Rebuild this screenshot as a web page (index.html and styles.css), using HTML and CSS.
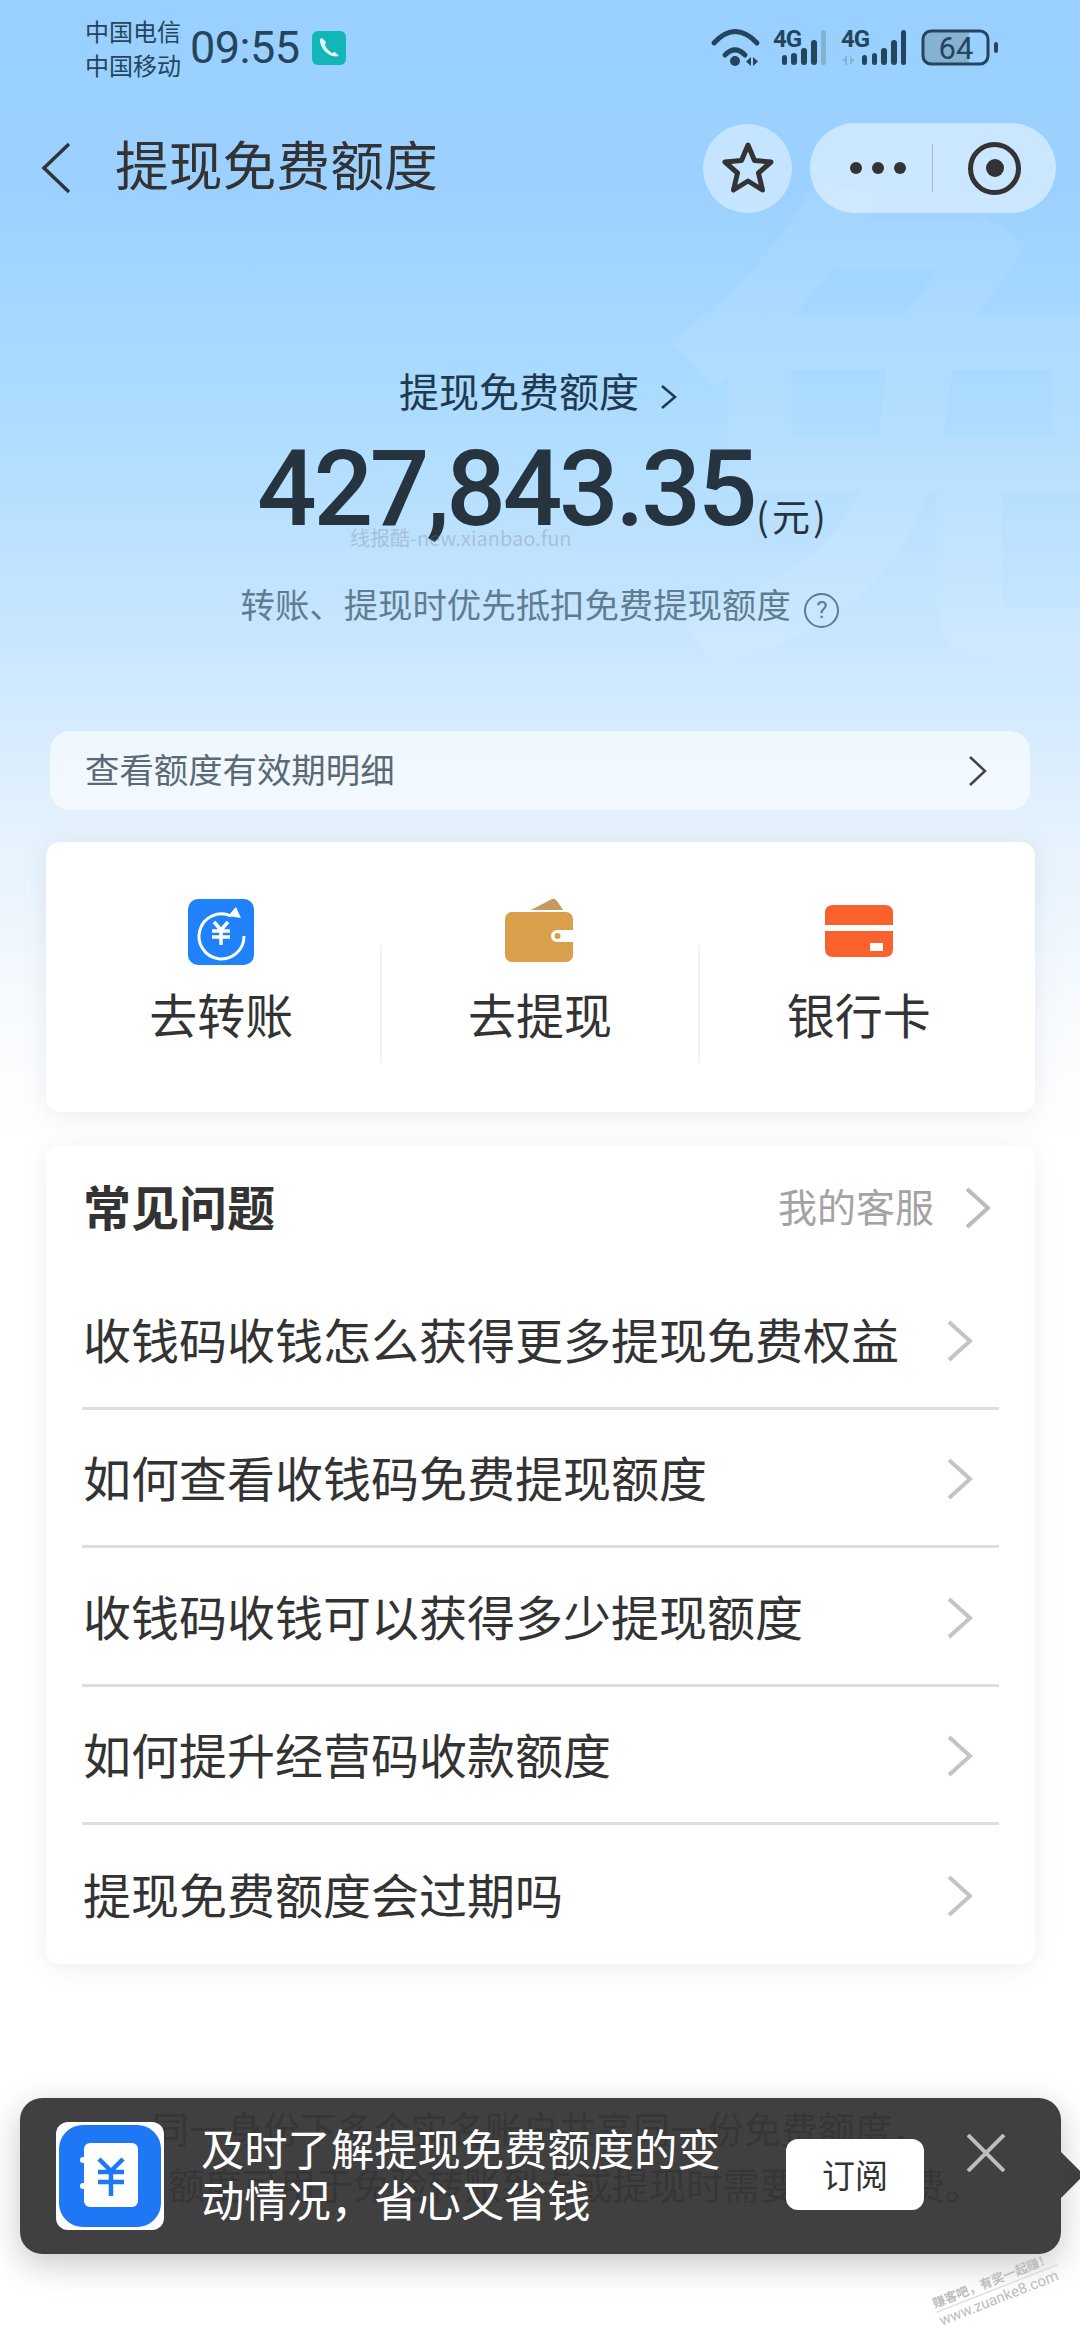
FILE: index.html
```html
<!DOCTYPE HTML>
<html>
	<head>
		<meta charset="utf-8">
		<title>提现免费额度</title>
		<link rel="stylesheet" href="styles.css">
	</head>
	<body>
		<div class="page">
			<div class="bigchar">免</div>

			<div class="status">
				<div class="carrier">
					<div>中国电信</div>
					<div>中国移动</div>
				</div>
				<div class="time">09:55</div>
				<svg class="callicon" width="34" height="34" viewBox="0 0 34 34">
					<rect width="34" height="34" rx="6" fill="#12b5b8"/>
					<path d="M8 8 C7 16 17 28 27 25 L23 21 L20 22 C17 20 14 17 13 14 L14 11 L10 7 Z" fill="#dff8f6"/>
				</svg>
				<svg class="sysicons" width="290" height="44" viewBox="0 0 290 44">
					<g fill="none" stroke="#24455c" stroke-width="5" stroke-linecap="round">
						<path d="M4 17 Q25 -6 47 17"/>
						<path d="M15 29 Q25 19 35 29"/>
					</g>
					<circle cx="25" cy="35" r="5" fill="#24455c"/>
					<path d="M41 31 L36 35.500 L41 40 Z M43 31 L48 35.500 L43 40 Z" fill="#24455c"/>

					<text class="gtext" x="63" y="21">4G</text>
					<rect x="72" y="29" width="5" height="10" rx="2.500" fill="#24455c"/>
					<rect x="81" y="27" width="6" height="12" rx="3" fill="#24455c"/>
					<rect x="91" y="22" width="6" height="17" rx="3" fill="#24455c"/>
					<rect x="101" y="14" width="6" height="25" rx="3" fill="#24455c"/>
					<rect x="111" y="4" width="5" height="35" rx="2.500" fill="#84b2d3"/>

					<text class="gtext" x="131" y="21">4G</text>
					<path d="M137 29 L132 35 L135 35 L135 39 L137 39 Z M140 29 L140 39 L145 33 L142 33 Z" fill="#84b2d3"/>
					<rect x="152" y="29" width="5" height="10" rx="2.500" fill="#24455c"/>
					<rect x="162" y="27" width="5" height="12" rx="2.500" fill="#24455c"/>
					<rect x="171" y="22" width="6" height="17" rx="3" fill="#24455c"/>
					<rect x="181" y="14" width="6" height="25" rx="3" fill="#24455c"/>
					<rect x="191" y="4" width="5" height="35" rx="2.500" fill="#24455c"/>

					<path d="M216 6 H259 V37 H216 Q214 37 214 35 V8 Q214 6 216 6 Z" fill="#84b2d3"/>
					<rect x="213" y="5" width="65" height="33" rx="8" fill="none" stroke="#24455c" stroke-width="3"/>
					<text class="battext" x="246" y="33" text-anchor="middle">64</text>
					<rect x="284" y="16" width="4" height="11" rx="2" fill="#24455c"/>
				</svg>
			</div>

			<div class="nav">
				<svg class="back" width="32" height="52" viewBox="0 0 32 52">
					<path d="M29 2 L4 26 L29 50" fill="none" stroke="#333" stroke-width="3.500"/>
				</svg>
				<div class="navtitle">提现免费额度</div>
				<div class="starbtn">
					<svg width="54" height="54" viewBox="0 0 54 54">
						<path d="M27 4 L33.500 19.500 L50 21 L37.500 32 L41.500 49 L27 40 L12.500 49 L16.500 32 L4 21 L20.500 19.500 Z" fill="none" stroke="#333" stroke-width="5" stroke-linejoin="round"/>
					</svg>
				</div>
				<div class="capsule">
					<div class="dots"><span></span><span></span><span></span></div>
					<div class="capline"></div>
					<div class="target"><span></span></div>
				</div>
			</div>

			<div class="hero">
				<div class="herolabel">提现免费额度
					<svg width="18" height="26" viewBox="0 0 18 26">
						<path d="M2 2 L15 13 L2 24" fill="none" stroke="#1f3a4e" stroke-width="2.500"/>
					</svg>
				</div>
				<div class="amount">427,843.35<span class="unit">(元)</span></div>
				<div class="herosub">转账、提现时优先抵扣免费提现额度
					<span class="help">?</span>
				</div>
				<div class="stamp">线报酷-new.xianbao.fun</div>
			</div>

			<div class="linkrow">
				<span>查看额度有效期明细</span>
				<svg width="20" height="32" viewBox="0 0 20 32">
					<path d="M2 2 L17 16 L2 30" fill="none" stroke="#444" stroke-width="2.500"/>
				</svg>
			</div>

			<div class="actions">
				<div class="action">
					<svg class="acticon" width="66" height="66" viewBox="0 0 66 66">
						<rect width="66" height="66" rx="10" fill="#1f82fa"/>
						<path d="M43 17 A22.500 22.500 0 1 0 56 37" fill="none" stroke="#fff" stroke-width="3"/>
						<path d="M48 8 L53 19 L40 17 Z" fill="#fff"/>
						<path d="M26 23 L33 31 L40 23 M24 32 H42 M24 38 H42 M33 31 V46" fill="none" stroke="#fff" stroke-width="3.500"/>
					</svg>
					<div class="actname">去转账</div>
				</div>
				<div class="sep"></div>
				<div class="action">
					<svg class="acticon" width="70" height="66" viewBox="0 0 70 66">
						<path d="M26 11 L47 0 Q50 -1 52 2 L58 11 Z" fill="#c49a5e"/>
						<rect y="13" width="68" height="50" rx="7" fill="#d99f4b"/>
						<path d="M70 31 H52 A6 6 0 0 0 52 43 H70 Z" fill="#fff"/>
						<circle cx="52.500" cy="37" r="3" fill="#d99f4b"/>
					</svg>
					<div class="actname">去提现</div>
				</div>
				<div class="sep"></div>
				<div class="action">
					<svg class="acticon" width="68" height="66" viewBox="0 0 68 66">
						<path d="M8 6 H60 Q68 6 68 14 V26 H0 V14 Q0 6 8 6 Z" fill="#fb612c"/>
						<path d="M0 32 H68 V50 Q68 58 60 58 H8 Q0 58 0 50 Z" fill="#fb612c"/>
						<rect x="45" y="44" width="13" height="8" fill="#fff"/>
					</svg>
					<div class="actname">银行卡</div>
				</div>
			</div>

			<div class="faq">
				<div class="faqhead">
					<div class="faqtitle">常见问题</div>
					<div class="kefu">我的客服</div>
					<svg width="28" height="42" viewBox="0 0 28 42">
						<path d="M3 2 L24 21 L3 40" fill="none" stroke="#bbb" stroke-width="4"/>
					</svg>
				</div>
				<div class="faqrow">
					<span>收钱码收钱怎么获得更多提现免费权益</span>
					<svg width="28" height="42" viewBox="0 0 28 42"><path d="M3 2 L24 21 L3 40" fill="none" stroke="#c4c4c4" stroke-width="4"/></svg>
				</div>
				<div class="faqrow">
					<span>如何查看收钱码免费提现额度</span>
					<svg width="28" height="42" viewBox="0 0 28 42"><path d="M3 2 L24 21 L3 40" fill="none" stroke="#c4c4c4" stroke-width="4"/></svg>
				</div>
				<div class="faqrow">
					<span>收钱码收钱可以获得多少提现额度</span>
					<svg width="28" height="42" viewBox="0 0 28 42"><path d="M3 2 L24 21 L3 40" fill="none" stroke="#c4c4c4" stroke-width="4"/></svg>
				</div>
				<div class="faqrow">
					<span>如何提升经营码收款额度</span>
					<svg width="28" height="42" viewBox="0 0 28 42"><path d="M3 2 L24 21 L3 40" fill="none" stroke="#c4c4c4" stroke-width="4"/></svg>
				</div>
				<div class="faqrow last">
					<span>提现免费额度会过期吗</span>
					<svg width="28" height="42" viewBox="0 0 28 42"><path d="M3 2 L24 21 L3 40" fill="none" stroke="#c4c4c4" stroke-width="4"/></svg>
				</div>
			</div>

			<div class="footnote">
				<div class="fline1">同一身份下多个实名账户共享同一份免费额度，</div>
				<div class="fline2">额度可用于免验转账到卡或提现时需要的手续费。</div>
			</div>

			<div class="banner">
				<svg class="appicon" width="108" height="108" viewBox="0 0 108 108">
					<rect width="108" height="108" rx="12" fill="#fff"/>
					<rect x="3" y="3" width="102" height="102" rx="24" fill="#1e78f5"/>
					<rect x="24" y="35" width="10" height="6" rx="3" fill="#fff"/>
					<rect x="24" y="61" width="10" height="6" rx="3" fill="#fff"/>
					<rect x="28" y="21" width="54" height="64" rx="6" fill="#fff"/>
					<path d="M43 37 L55 49 L67 37 M42 50 H68 M42 60 H68 M55 49 V74" fill="none" stroke="#1e78f5" stroke-width="4.500"/>
				</svg>
				<div class="bannertext">及时了解提现免费额度的变<br>动情况，省心又省钱</div>
				<div class="subbtn">订阅</div>
				<svg class="closex" width="38" height="38" viewBox="0 0 38 38">
					<path d="M1 1 L37 37 M37 1 L1 37" stroke="#bdbdbd" stroke-width="4"/>
				</svg>
			</div>
			<div class="bannertip"></div>

			<div class="corner">
				<div class="cornertop">赚客吧，有奖一起赚！</div>
				<div>www.zuanke8.com</div>
			</div>
		</div>
	</body>
</html>
```
FILE: styles.css
```css
body
{
	margin: 0;
	font-family: "Noto Sans CJK SC", sans-serif;
	color: #333;
}
.page
{
	position: relative;
	width: 1080px;
	height: 2340px;
	overflow: hidden;
	background: linear-gradient(180deg, #9ad0ff 0, #9cd1ff 190px, #addcff 420px, #c9e6ff 640px, #e6f2fd 840px, #f8fbfe 1020px, #fff 1150px);
}
.bigchar
{
	position: absolute;
	left: 657px;
	top: 100px;
	font-size: 520px;
	line-height: 600px;
	font-weight: 700;
	color: rgba(255, 255, 255, 0.08);
}
.status
{
	position: relative;
	display: flex;
	align-items: flex-start;
	height: 109px;
	padding: 14px 0 0 85px;
	color: #24455c;
}
.carrier
{
	font-size: 24px;
	line-height: 34px;
	width: 105px;
}
.time
{
	font-family: Roboto, sans-serif;
	font-size: 45px;
	line-height: 68px;
	width: 122px;
	letter-spacing: -0.5px;
}
.callicon
{
	margin-top: 17px;
}
.sysicons
{
	margin: 12px 0 0 364px;
}
.gtext
{
	font-family: Roboto, sans-serif;
	font-size: 24px;
	font-weight: 700;
	letter-spacing: -1px;
	fill: #24455c;
}
.battext
{
	font-family: Roboto, sans-serif;
	font-size: 31px;
	fill: #24455c;
}
.nav
{
	position: relative;
	display: flex;
	align-items: center;
	height: 90px;
	padding-left: 40px;
}
.navtitle
{
	font-size: 53.800px;
	line-height: 70px;
	margin-left: 43px;
	padding-bottom: 10px;
	width: 588px;
}
.starbtn
{
	display: flex;
	justify-content: center;
	align-items: center;
	width: 89px;
	height: 89px;
	border-radius: 50%;
	background: rgba(255, 255, 255, 0.42);
}
.capsule
{
	display: flex;
	align-items: center;
	width: 246px;
	height: 90px;
	margin-left: 18px;
	border-radius: 45px;
	background: rgba(255, 255, 255, 0.48);
}
.dots
{
	display: flex;
	gap: 10px;
	margin-left: 40px;
}
.dots span
{
	width: 12px;
	height: 12px;
	border-radius: 50%;
	background: #333;
}
.capline
{
	width: 1px;
	height: 48px;
	margin-left: 26px;
	background: #aab8c2;
}
.target
{
	display: flex;
	justify-content: center;
	align-items: center;
	box-sizing: border-box;
	width: 53px;
	height: 53px;
	margin-left: 35px;
	border: 5px solid #333;
	border-radius: 50%;
}
.target span
{
	width: 18px;
	height: 18px;
	border-radius: 50%;
	background: #333;
}
.hero
{
	position: relative;
	margin-top: 152px;
	text-align: center;
}
.herolabel
{
	padding-right: 3px;
	font-size: 40px;
	line-height: 50px;
	color: #1f3a4e;
}
.herolabel svg
{
	margin-left: 12px;
	vertical-align: -3px;
}
.amount
{
	height: 110px;
	margin-top: 20px;
	padding-left: 257px;
	font-family: Roboto, sans-serif;
	font-size: 105px;
	font-weight: 500;
	line-height: 110px;
	letter-spacing: -3.300px;
	color: #263440;
	text-align: left;
}
.unit
{
	font-family: "Noto Sans CJK SC", sans-serif;
	font-size: 38px;
	font-weight: 400;
	line-height: 1;
	letter-spacing: 3px;
	margin-left: 2px;
	vertical-align: -6px;
}
.herosub
{
	height: 40px;
	margin-top: 38px;
	font-size: 34.400px;
	line-height: 40px;
	color: #607d90;
}
.help
{
	display: inline-block;
	box-sizing: border-box;
	width: 35px;
	height: 35px;
	margin-left: 6px;
	border: 2px solid #607d90;
	border-radius: 50%;
	font-family: Roboto, sans-serif;
	font-size: 24px;
	line-height: 30px;
	text-align: center;
}
.stamp
{
	position: absolute;
	left: 350px;
	top: 163px;
	font-size: 20px;
	line-height: 20px;
	color: rgba(120, 120, 120, 0.33);
}
.linkrow
{
	display: flex;
	justify-content: space-between;
	align-items: center;
	box-sizing: border-box;
	width: 980px;
	height: 79px;
	margin: 108px 0 0 50px;
	padding: 0 42px 6px 35px;
	border-radius: 20px;
	background: rgba(255, 255, 255, 0.6);
	font-size: 34.400px;
	color: #5a6a75;
}
.linkrow svg
{
	margin-top: 6px;
}
.actions
{
	display: flex;
	box-sizing: border-box;
	width: 989px;
	height: 270px;
	margin: 32px 0 0 46px;
	padding: 0 18px 0 17px;
	border-radius: 14px;
	background: #fff;
	box-shadow: 0 4px 24px rgba(100, 120, 150, 0.12);
}
.action
{
	flex: 1;
	display: flex;
	flex-direction: column;
	align-items: center;
	padding-top: 57px;
}
.acticon
{
	display: block;
	overflow: visible;
}
.actname
{
	margin-top: 15px;
	font-size: 48px;
	line-height: 66px;
}
.sep
{
	width: 2px;
	height: 118px;
	margin-top: 103px;
	background: #eef2f6;
}
.faq
{
	box-sizing: border-box;
	width: 989px;
	height: 819px;
	margin: 33px 0 0 46px;
	padding: 0 36px;
	border-radius: 14px;
	background: #fff;
	box-shadow: 0 4px 24px rgba(100, 120, 150, 0.12);
}
.faqhead
{
	display: flex;
	align-items: center;
	box-sizing: border-box;
	height: 126px;
	padding-bottom: 6px;
	padding-left: 1px;
}
.faqtitle
{
	flex: 1;
	font-size: 48px;
	font-weight: 700;
}
.kefu
{
	font-size: 39px;
	color: #a3a3a3;
	margin-right: 30px;
}
.faqhead svg
{
	margin: 6px 7px 0 0;
}
.faqrow
{
	display: flex;
	justify-content: space-between;
	align-items: center;
	box-sizing: border-box;
	height: 138.500px;
	padding: 0 0 2px 1px;
	border-bottom: 3px solid #dedede;
	font-size: 48px;
}
.faqrow svg
{
	margin: 6px 25px 0 0;
}
.faqrow.last
{
	border-bottom: none;
}
.footnote
{
	margin-top: 136px;
	font-size: 37px;
	line-height: 56px;
	color: #555;
}
.fline1
{
	padding-left: 152px;
}
.fline2
{
	padding-left: 168px;
}
.banner
{
	position: absolute;
	left: 20px;
	top: 2098px;
	display: flex;
	align-items: center;
	box-sizing: border-box;
	width: 1041px;
	height: 156px;
	padding-left: 36px;
	border-radius: 22px;
	background: rgba(52, 52, 52, 0.94);
	box-shadow: 0 10px 34px rgba(0, 0, 0, 0.22);
}
.bannertext
{
	width: 585px;
	margin: -6px 0 0 37px;
	font-size: 43.300px;
	line-height: 51px;
	color: #fff;
}
.subbtn
{
	width: 138px;
	height: 71px;
	margin-top: -3px;
	border-radius: 12px;
	background: #fff;
	font-size: 33px;
	line-height: 71px;
	text-align: center;
}
.closex
{
	margin: -46px 0 0 43px;
}
.bannertip
{
	position: absolute;
	left: 1061px;
	top: 2152px;
	width: 0;
	height: 0;
	border-top: 23px solid transparent;
	border-bottom: 23px solid transparent;
	border-left: 23px solid #3f3f3f;
}
.corner
{
	position: absolute;
	left: 932px;
	top: 2270px;
	width: 130px;
	transform: rotate(-21.500deg);
	font-family: Roboto, sans-serif;
	font-size: 15px;
	line-height: 18px;
	color: #bdbdbd;
	white-space: nowrap;
}
.cornertop
{
	border-bottom: 1px solid #d5d5d5;
	font-family: "Noto Sans CJK SC", sans-serif;
	font-size: 12.600px;
	font-weight: 700;
}
```
